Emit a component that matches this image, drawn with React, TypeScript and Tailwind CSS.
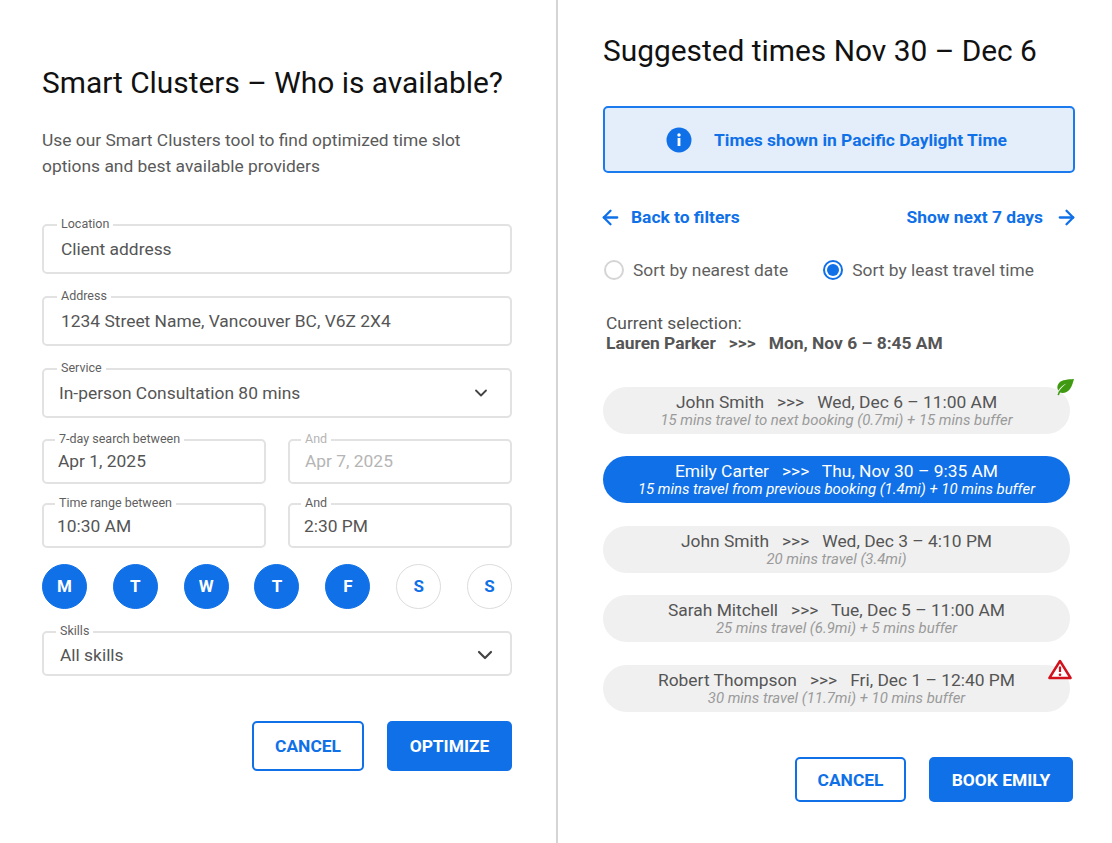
import { ArrowLeft, ArrowRight, ChevronDown } from "lucide-react";

function Field({ label, value, labelClass = "left-[13px]", textClass = "pl-[17px]", height = "h-[50px]", muted = false, chevron, className = "" }: {
  label: string;
  value: string;
  labelClass?: string;
  textClass?: string;
  height?: string;
  muted?: boolean;
  chevron?: string;
  className?: string;
}) {
  return (
    <div className={`relative flex items-center justify-between rounded-[5px] border-2 border-[#e2e2e2] bg-white ${height} ${textClass} ${className}`}>
      <span className={`absolute top-[-10px] bg-white px-1 text-[12.5px] leading-[16px] ${labelClass} ${muted ? "text-[#b5b5b5]" : "text-[#5f5f5f]"}`}>{label}</span>
      <span className={`text-[17.4px] ${muted ? "text-[#b5b5b5]" : "text-[#555555]"}`}>{value}</span>
      {chevron && <ChevronDown className={`text-[#444444] ${chevron}`} strokeWidth={2.2} />}
    </div>
  );
}

function Day({ letter, active }: { letter: string; active: boolean }) {
  return (
    <div className={`flex h-[45px] w-[45px] items-center justify-center rounded-full border-[1.5px] text-[17px] font-bold ${active ? "border-[#0f70e8] bg-[#0f70e8] text-white" : "border-[#dcdcdc] bg-white text-[#0f70e8]"}`}>
      {letter}
    </div>
  );
}

function Slot({ name, time, note, active }: { name: string; time: string; note: string; active?: boolean }) {
  return (
    <div className={`flex h-[47px] w-[467px] flex-col items-center justify-center rounded-full ${active ? "bg-[#0f70e8] text-white" : "bg-[#f0f0f0] text-[#555555]"}`}>
      <div className="whitespace-pre text-[17.4px] leading-[20px]">{name}{"   >>>   "}{time}</div>
      <div className={`text-[14.9px] italic leading-[17px] ${active ? "text-white" : "text-[#9a9a9a]"}`}>{note}</div>
    </div>
  );
}

function Leaf() {
  return (
    <svg width="20" height="18" viewBox="0 0 20 18" className="absolute right-[-5px] top-[-9px]">
      <path d="M19 1C13 1.5 7 1.5 4 5 1.8 7.6 2 10.5 3.4 12.6 5 9.5 8 7 11.5 5.5 8.5 7.5 5.5 10.5 3.6 13.8L2.5 17 4 17.3 5 14.6C8.5 15.6 12.5 14.5 15 11 17 8 18 4.5 19 1Z" fill="#3f9a12" />
    </svg>
  );
}

function Warning() {
  return (
    <svg width="24" height="21" viewBox="0 0 24 21" className="absolute right-[-2px] top-[-6px]">
      <path d="M12 2 22.6 19H1.4Z" fill="white" stroke="#d3111c" strokeWidth="2.4" strokeLinejoin="round" />
      <path d="M12 7.5V13" stroke="#d3111c" strokeWidth="2.2" />
      <circle cx="12" cy="15.8" r="1.3" fill="#d3111c" />
    </svg>
  );
}

export default function App() {
  return (
    <div className="flex h-[843px] w-[1112px] overflow-hidden bg-white font-['Roboto',sans-serif]">
      <section className="h-full w-[558px] shrink-0 border-r-2 border-[#d5d5d5] pl-[42px] pr-[44px] pt-[64px]">
        <h1 className="text-[29.86px] leading-[38px] text-[#111111]">Smart Clusters – Who is available?</h1>
        <p className="mt-[25px] text-[17.4px] leading-[26px] text-[#5a5a5a]">
          Use our Smart Clusters tool to find optimized time slot<br />options and best available providers
        </p>
        <div className="mt-[45px] flex flex-col">
          <Field label="Location" value="Client address" />
          <Field label="Address" value="1234 Street Name, Vancouver BC, V6Z 2X4" className="mt-[22px]" />
          <Field label="Service" value="In-person Consultation 80 mins" textClass="pl-[15px] pr-[19px]" chevron="h-[20px] w-[20px]" className="mt-[22px]" />
          <div className="mt-[21px] grid grid-cols-2 gap-x-[22px]">
            <Field label="7-day search between" value="Apr 1, 2025" labelClass="left-[11px]" textClass="pl-[14px]" height="h-[45px]" />
            <Field label="And" value="Apr 7, 2025" labelClass="left-[11px]" textClass="pl-[15px]" height="h-[45px]" muted />
          </div>
          <div className="mt-[19px] grid grid-cols-2 gap-x-[22px]">
            <Field label="Time range between" value="10:30 AM" labelClass="left-[11px]" textClass="pl-[13px] pt-[1px]" height="h-[45px]" />
            <Field label="And" value="2:30 PM" labelClass="left-[11px]" textClass="pl-[14px] pt-[1px]" height="h-[45px]" />
          </div>
          <div className="mt-[16px] flex justify-between">
            <Day letter="M" active />
            <Day letter="T" active />
            <Day letter="W" active />
            <Day letter="T" active />
            <Day letter="F" active />
            <Day letter="S" active={false} />
            <Day letter="S" active={false} />
          </div>
          <Field label="Skills" value="All skills" labelClass="left-[12px]" textClass="pl-[16px] pr-[13px] pt-[3px]" height="h-[45px]" chevron="h-[24px] w-[24px]" className="mt-[22px]" />
          <div className="mt-[45px] flex justify-end gap-[23px]">
            <button className="h-[50px] w-[112px] rounded-[5px] border-2 border-[#0f70e8] bg-white text-[17.4px] font-bold text-[#0f70e8]">CANCEL</button>
            <button className="h-[50px] w-[125px] rounded-[5px] bg-[#0f70e8] text-[17.4px] font-bold text-white">OPTIMIZE</button>
          </div>
        </div>
      </section>

      <section className="flex-1 pl-[45px] pr-[37px] pt-[32px]">
        <h2 className="text-[29.86px] leading-[38px] text-[#111111]">Suggested times Nov 30 – Dec 6</h2>
        <div className="mt-[36px] flex h-[67px] items-center rounded-[5px] border-2 border-[#1b7bee] bg-[#e4eefa] pl-[61px] text-[17.4px] font-bold text-[#0f70e8]">
          <svg width="26" height="26" viewBox="0 0 26 26" className="mr-[22px]">
            <circle cx="13" cy="13" r="12.5" fill="#0f70e8" />
            <rect x="11.6" y="11" width="2.8" height="8" fill="white" />
            <circle cx="13" cy="8" r="1.7" fill="white" />
          </svg>
          <span className="pt-[1px]">Times shown in Pacific Daylight Time</span>
        </div>
        <div className="mt-[34px] flex items-center justify-between text-[17.4px] font-bold leading-[20px] text-[#0f70e8]">
          <div className="-ml-[4.5px] flex h-[20px] items-center gap-[9.5px]">
            <ArrowLeft className="h-[23px] w-[23px]" strokeWidth={2.4} />
            Back to filters
          </div>
          <div className="-mr-[2.5px] flex h-[20px] items-center gap-[11.5px]">
            Show next 7 days
            <ArrowRight className="h-[23px] w-[23px]" strokeWidth={2.4} />
          </div>
        </div>
        <div className="mt-[33px] flex items-center pl-[1px] text-[17.4px] leading-[20px] text-[#5f5f5f]">
          <span className="h-[20px] w-[20px] rounded-full border-2 border-[#d5d5d5]" />
          <span className="ml-[9px]">Sort by nearest date</span>
          <span className="ml-[35px] flex h-[20px] w-[20px] items-center justify-center rounded-full border-2 border-[#0f70e8]">
            <span className="h-[12px] w-[12px] rounded-full bg-[#0f70e8]" />
          </span>
          <span className="ml-[9px]">Sort by least travel time</span>
        </div>
        <div className="mt-[33px] pl-[3px] text-[17.4px] leading-[20px] text-[#555555]">
          <div>Current selection:</div>
          <div className="whitespace-pre font-bold">{"Lauren Parker   >>>   Mon, Nov 6 – 8:45 AM"}</div>
        </div>
        <div className="mt-[33.5px] flex flex-col gap-[22.5px]">
          <div className="relative w-[467px]">
            <Slot name="John Smith" time="Wed, Dec 6 – 11:00 AM" note="15 mins travel to next booking (0.7mi) + 15 mins buffer" />
            <Leaf />
          </div>
          <Slot name="Emily Carter" time="Thu, Nov 30 – 9:35 AM" note="15 mins travel from previous booking (1.4mi) + 10 mins buffer" active />
          <Slot name="John Smith" time="Wed, Dec 3 – 4:10 PM" note="20 mins travel (3.4mi)" />
          <Slot name="Sarah Mitchell" time="Tue, Dec 5 – 11:00 AM" note="25 mins travel (6.9mi) + 5 mins buffer" />
          <div className="relative w-[467px]">
            <Slot name="Robert Thompson" time="Fri, Dec 1 – 12:40 PM" note="30 mins travel (11.7mi) + 10 mins buffer" />
            <Warning />
          </div>
        </div>
        <div className="mt-[45.5px] flex justify-end gap-[23px] pr-[2px]">
          <button className="h-[45px] w-[111px] rounded-[5px] border-2 border-[#0f70e8] bg-white pt-[1px] text-[17.4px] font-bold text-[#0f70e8]">CANCEL</button>
          <button className="h-[45px] w-[144px] rounded-[5px] bg-[#0f70e8] pt-[1px] text-[17.4px] font-bold text-white">BOOK EMILY</button>
        </div>
      </section>
    </div>
  );
}
